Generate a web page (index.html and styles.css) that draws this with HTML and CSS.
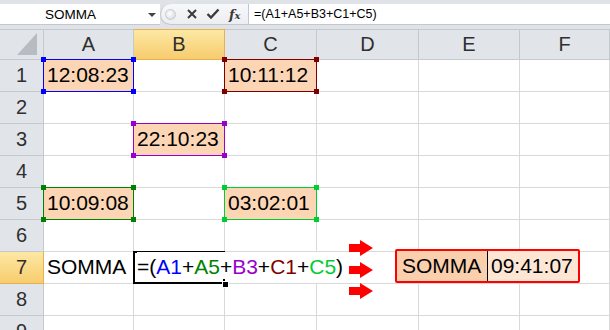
FILE: index.html
```html
<!DOCTYPE html>
<html lang="it">
<head>
  <meta charset="UTF-8">
  <title>SOMMA orari</title>
  <link rel="stylesheet" href="styles.css">
</head>
<body>
  <!-- Barra della formula -->
  <div class="formula-bar">
    <div class="name-box">
      <span class="name">SOMMA</span>
      <span class="caret"></span>
    </div>
    <div class="tools">
      <span class="grip"></span>
      <svg class="tool" width="12" height="12" viewBox="0 0 12 12">
        <path d="M2 2 L10 10 M10 2 L2 10" stroke="#3a3a3a" stroke-width="2" fill="none"/>
      </svg>
      <svg class="tool" width="14" height="12" viewBox="0 0 14 12">
        <path d="M1.5 6 L5 9.5 L12.5 1.5" stroke="#3a3a3a" stroke-width="2.4" fill="none"/>
      </svg>
      <span class="fx">f<span>x</span></span>
    </div>
    <div class="formula">=(A1+A5+B3+C1+C5)</div>
  </div>

  <!-- Foglio -->
  <div class="sheet">
    <div class="corner"><span class="corner-tri"></span></div>
    <div class="col-head">A</div>
    <div class="col-head active">B</div>
    <div class="col-head">C</div>
    <div class="col-head">D</div>
    <div class="col-head">E</div>
    <div class="col-head">F</div>

    <div class="row-head">1</div>
    <div class="cell time ref ref-blue">12:08:23</div>
    <div class="cell"></div>
    <div class="cell time ref ref-maroon">10:11:12</div>
    <div class="cell"></div>
    <div class="cell"></div>
    <div class="cell"></div>

    <div class="row-head">2</div>
    <div class="cell"></div>
    <div class="cell"></div>
    <div class="cell"></div>
    <div class="cell"></div>
    <div class="cell"></div>
    <div class="cell"></div>

    <div class="row-head">3</div>
    <div class="cell"></div>
    <div class="cell time ref ref-purple">22:10:23</div>
    <div class="cell"></div>
    <div class="cell"></div>
    <div class="cell"></div>
    <div class="cell"></div>

    <div class="row-head">4</div>
    <div class="cell"></div>
    <div class="cell"></div>
    <div class="cell"></div>
    <div class="cell"></div>
    <div class="cell"></div>
    <div class="cell"></div>

    <div class="row-head">5</div>
    <div class="cell time ref ref-green">10:09:08</div>
    <div class="cell"></div>
    <div class="cell time ref ref-lime">03:02:01</div>
    <div class="cell"></div>
    <div class="cell"></div>
    <div class="cell"></div>

    <div class="row-head">6</div>
    <div class="cell"></div>
    <div class="cell"></div>
    <div class="cell"></div>
    <div class="cell"></div>
    <div class="cell"></div>
    <div class="cell"></div>

    <div class="row-head active">7</div>
    <div class="cell">SOMMA</div>
    <div class="cell editing">
      <span class="edit-text">=(<span class="c-blue">A1</span>+<span class="c-green">A5</span>+<span class="c-purple">B3</span>+<span class="c-maroon">C1</span>+<span class="c-lime">C5</span>)</span>
    </div>
    <div class="cell"></div>
    <div class="cell"></div>

    <div class="row-head">8</div>
    <div class="cell"></div>
    <div class="cell"></div>
    <div class="cell"></div>
    <div class="cell"></div>
    <div class="cell"></div>
    <div class="cell"></div>

    <div class="row-head">9</div>
    <div class="cell"></div>
    <div class="cell"></div>
    <div class="cell"></div>
    <div class="cell"></div>
    <div class="cell"></div>
    <div class="cell"></div>

    <!-- frecce e risultato sopra la griglia -->
    <svg class="arrow arrow-1" width="24" height="16" viewBox="0 0 24 16">
      <polygon points="0,4 11,4 11,0 24,8 11,16 11,12 0,12" fill="#ff0000"/>
    </svg>
    <svg class="arrow arrow-2" width="24" height="16" viewBox="0 0 24 16">
      <polygon points="0,4 11,4 11,0 24,8 11,16 11,12 0,12" fill="#ff0000"/>
    </svg>
    <svg class="arrow arrow-3" width="24" height="16" viewBox="0 0 24 16">
      <polygon points="0,4 11,4 11,0 24,8 11,16 11,12 0,12" fill="#ff0000"/>
    </svg>

    <div class="result">
      <div class="result-label">SOMMA</div>
      <div class="result-value">09:41:07</div>
    </div>
  </div>
</body>
</html>
```

FILE: styles.css
```css
body {
  margin: 0;
  width: 610px;
  height: 330px;
  overflow: hidden;
  background: #fff;
  font-family: "Liberation Sans", Arial, sans-serif;
  color: #000;
}

/* barra della formula */
.formula-bar {
  display: flex;
  height: 29px;
  padding-top: 4px;
  box-sizing: border-box;
  background: #dfe3e8;
}

.name-box {
  position: relative;
  width: 160px;
  height: 21px;
  background: #fff;
  border-bottom: 1px solid #c3c8ce;
  box-sizing: border-box;
  font-size: 13.5px;
}

.name {
  position: absolute;
  left: 45px;
  top: 3px;
}

.caret {
  position: absolute;
  left: 148px;
  top: 9px;
  border-left: 4px solid transparent;
  border-right: 4px solid transparent;
  border-top: 4px solid #444;
}

.tools {
  display: flex;
  align-items: center;
  width: 88px;
  height: 21px;
  background: linear-gradient(#f7f8fa, #eceef1);
  border-bottom: 1px solid #c3c8ce;
  box-sizing: border-box;
  border-radius: 11px 0 0 11px;
  border-left: 1px solid #c3c8ce;
}

.grip {
  width: 9px;
  height: 9px;
  margin-left: 4px;
  border-radius: 50%;
  background: radial-gradient(circle at 40% 40%, #fff, #cfd3d8);
  border: 1px solid #c8ccd1;
}

.tool {
  margin-left: 10px;
}

.tool + .tool {
  margin-left: 8px;
}

.fx {
  margin-left: 9px;
  font-family: "DejaVu Serif", "Liberation Serif", serif;
  font-style: italic;
  font-weight: bold;
  font-size: 13px;
  color: #3a3a3a;
}

.fx span {
  font-size: 10px;
}

.formula {
  flex: 1;
  height: 21px;
  padding-left: 5px;
  background: #fff;
  border-left: 1px solid #c3c8ce;
  border-bottom: 1px solid #c3c8ce;
  box-sizing: border-box;
  font-size: 12.5px;
  line-height: 20px;
}

/* foglio */
.sheet {
  position: relative;
  display: grid;
  grid-template-columns: 44px 90px 91px 92px 102px 101px 1fr;
  grid-template-rows: 31px;
  grid-auto-rows: 32px;
}

.corner,
.col-head,
.row-head {
  background: #e1e5ea;
  border-right: 1px solid #c4c9cf;
  border-bottom: 1px solid #c4c9cf;
  box-sizing: border-box;
  color: #2f2f2f;
  font-size: 20px;
}

.corner {
  position: relative;
  border-top: 1px solid #c4c9cf;
}

.corner-tri {
  position: absolute;
  right: 6px;
  bottom: 4px;
  width: 0;
  height: 0;
  border-left: 20px solid transparent;
  border-bottom: 22px solid #b7bcc2;
}

.col-head {
  border-top: 1px solid #c4c9cf;
  display: flex;
  justify-content: center;
  align-items: flex-end;
  padding-bottom: 3px;
}

.row-head {
  display: flex;
  justify-content: center;
  align-items: flex-end;
  padding-bottom: 4px;
}

.col-head.active,
.row-head.active {
  background: linear-gradient(#fde8a4, #f7cc6e);
  border-color: #e9b04e;
}

.cell {
  position: relative;
  border-right: 1px solid #d9d9d9;
  border-bottom: 1px solid #d9d9d9;
  box-sizing: border-box;
  display: flex;
  align-items: flex-end;
  padding: 0 0 4px 3px;
  font-size: 21px;
  white-space: nowrap;
}

.time {
  background: #fcd5b4;
}

/* riferimenti colorati della formula */
.ref {
  z-index: 1;
}

.ref::before {
  content: "";
  position: absolute;
  left: -1px;
  top: -1px;
  right: -1px;
  bottom: -1px;
  border: 1px solid var(--ref);
}

.ref::after {
  content: "";
  position: absolute;
  left: -3px;
  top: -3px;
  right: -3px;
  bottom: -3px;
  background:
    linear-gradient(var(--ref), var(--ref)) left top / 5px 5px no-repeat,
    linear-gradient(var(--ref), var(--ref)) right top / 5px 5px no-repeat,
    linear-gradient(var(--ref), var(--ref)) left bottom / 5px 5px no-repeat,
    linear-gradient(var(--ref), var(--ref)) right bottom / 5px 5px no-repeat;
}

.ref-blue { --ref: #0000ff; }
.ref-maroon { --ref: #800000; }
.ref-purple { --ref: #9900cc; }
.ref-green { --ref: #008000; }
.ref-lime { --ref: #00cc33; }

.c-blue { color: #0000ff; }
.c-maroon { color: #800000; }
.c-purple { color: #9900cc; }
.c-green { color: #008000; }
.c-lime { color: #00cc33; }

/* cella in modifica: il testo scorre fino a D7 */
.editing {
  grid-column: span 3;
  z-index: 1;
}

.editing::before {
  content: "";
  position: absolute;
  left: -1px;
  top: -1px;
  width: 92px;
  height: 33px;
  border: 2px solid #000;
  box-sizing: border-box;
}

.editing::after {
  content: "";
  position: absolute;
  left: 88px;
  top: 29px;
  width: 5px;
  height: 5px;
  background: #000;
  border: 1px solid #fff;
}

.edit-text {
  position: relative;
  z-index: 1;
  padding-top: 3px;
  background: #fff;
}

.arrow {
  position: absolute;
  left: 349px;
  z-index: 2;
}

.arrow-1 { top: 211px; }
.arrow-2 { top: 233px; }
.arrow-3 { top: 254px; }

.result {
  position: absolute;
  left: 395px;
  top: 220px;
  width: 185px;
  height: 34px;
  display: flex;
  border: 2px solid #ff0000;
  border-radius: 2px;
  box-sizing: border-box;
  z-index: 2;
  font-size: 21px;
}

.result-label,
.result-value {
  display: flex;
  align-items: flex-end;
  padding-bottom: 3px;
}

.result-label {
  width: 91px;
  padding-left: 5px;
  background: #f9cfae;
  border-right: 1px solid #000;
  box-sizing: border-box;
}

.result-value {
  flex: 1;
  padding-left: 3px;
  background: #fde6d4;
}
```
